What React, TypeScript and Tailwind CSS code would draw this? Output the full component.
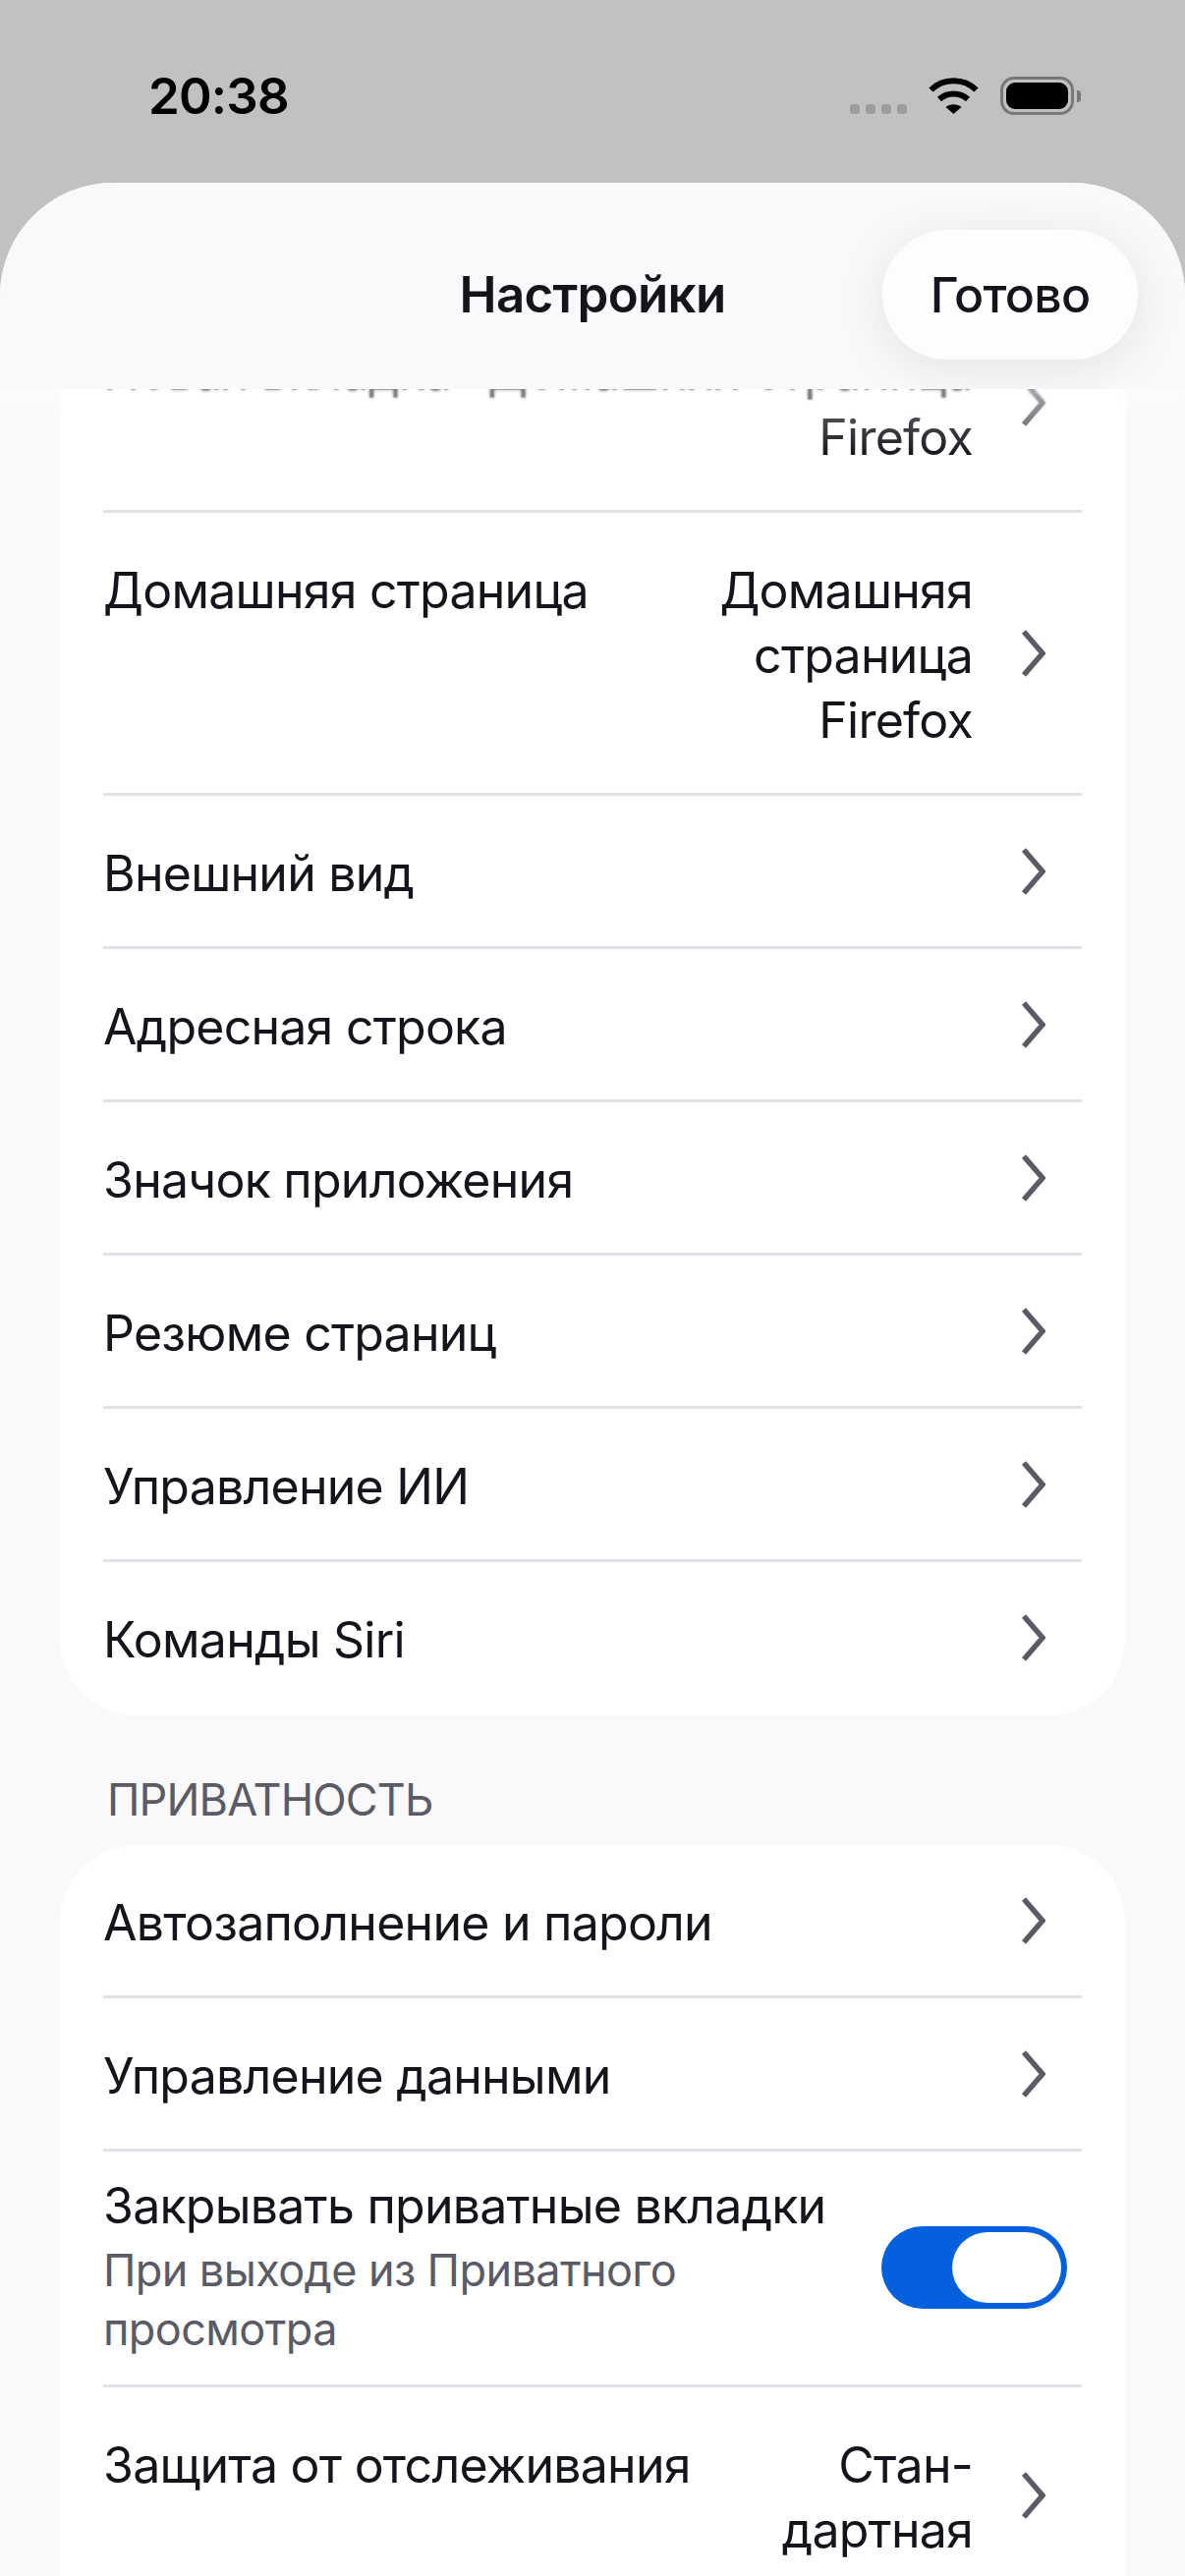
import React from "react";

const Chevron = () => (
  <svg width="25" height="50" viewBox="0 0 25 50" className="shrink-0" fill="none">
    <path d="M3 3 L22 25 L3 47" stroke="#5b5b66" strokeWidth="5.5" />
  </svg>
);

function Row({ label, value, last }: { label: string; value?: string[]; last?: boolean }) {
  return (
    <div className={`mx-[44px] flex items-center pr-[35px] ${last ? "pb-[44px] pt-[46px]" : "border-b-[3px] border-[#e0e0e6] pb-[41px] pt-[46px]"}`}>
      <div className="flex flex-1 items-start justify-between self-start">
        <span>{label}</span>
        {value && (
          <span className="text-right">
            {value.map((v) => (
              <span key={v} className="block">
                {v}
              </span>
            ))}
          </span>
        )}
      </div>
      <div className="ml-[49px] mr-[2px] mt-[-5px]">
        <Chevron />
      </div>
    </div>
  );
}

function Wifi() {
  return (
    <svg width="51" height="37" viewBox="0 0 51 37" fill="none">
      <path d="M2.5 12.5 C15 0 36 0 48.5 12.5" stroke="#000" strokeWidth="6" />
      <path d="M11 22 C19 14.5 32 14.5 40 22" stroke="#000" strokeWidth="6" />
      <path d="M17.5 30 C22 26.2 29 26.2 33.5 30 L25.5 37 Z" fill="#000" />
    </svg>
  );
}

export default function App() {
  return (
    <div className="flex h-[2622px] w-[1206px] flex-col overflow-hidden bg-[#c1c1c3] font-['Inter',sans-serif] text-[50px] leading-[66px] tracking-[-0.75px] text-[#15141a]">
      <div className="flex h-[186px] shrink-0 items-start justify-between pl-[151px] pr-[106px]">
        <span className="mt-[65px] text-[51px] font-semibold leading-[66px] tracking-[-0.8px] text-black">20:38</span>
        <div className="mt-[78px] flex items-start">
          <div className="mt-[28px] flex gap-[6px]">
            <span className="h-[10px] w-[10px] rounded-[3px] bg-[#9e9e9f]" />
            <span className="h-[10px] w-[10px] rounded-[3px] bg-[#9e9e9f]" />
            <span className="h-[10px] w-[10px] rounded-[3px] bg-[#9e9e9f]" />
            <span className="h-[10px] w-[10px] rounded-[3px] bg-[#9e9e9f]" />
          </div>
          <div className="ml-[22px] mt-[1px]">
            <Wifi />
          </div>
          <div className="ml-[22px] flex items-center">
            <div className="h-[39px] w-[75px] rounded-[14px] border-[3px] border-[#78787a] p-[3px]">
              <div className="h-full w-full rounded-[9px] bg-black" />
            </div>
            <div className="ml-[3px] h-[12px] w-[4px] rounded-r-[3px] bg-[#78787a]" />
          </div>
        </div>
      </div>

      <div className="relative flex-1 overflow-hidden rounded-t-[115px] bg-[#f9f9fb]">
        <div className="px-[61px] pt-[114px]">
          <div className="overflow-hidden rounded-[78px] bg-white">
            <Row label="Новая вкладка" value={["Домашняя страница", "Firefox"]} />
            <Row label="Домашняя страница" value={["Домашняя", "страница", "Firefox"]} />
            <Row label="Внешний вид" />
            <Row label="Адресная строка" />
            <Row label="Значок приложения" />
            <Row label="Резюме страниц" />
            <Row label="Управление ИИ" />
            <Row label="Команды Siri" last />
          </div>

          <div className="mb-[18px] ml-[48px] mt-[57px] text-[45px] leading-[57px] tracking-[-0.85px] text-[#5b5b66]">ПРИВАТНОСТЬ</div>

          <div className="overflow-hidden rounded-t-[78px] bg-white">
            <Row label="Автозаполнение и пароли" />
            <Row label="Управление данными" />
            <div className="mx-[44px] flex items-center border-b-[3px] border-[#e0e0e6] pb-[26px] pr-[15px] pt-[22px]">
              <div className="flex-1">
                <div className="mb-[3px]">Закрывать приватные вкладки</div>
                <div className="text-[45px] leading-[60px] tracking-[-0.6px] text-[#5b5b66]">
                  При выходе из Приватного
                  <br />
                  просмотра
                </div>
              </div>
              <div className="mt-[2px] flex h-[84px] w-[189px] shrink-0 items-center justify-end rounded-full bg-[#0560dd] pr-[6px]">
                <div className="h-[72px] w-[111px] rounded-full bg-white" />
              </div>
            </div>
            <Row label="Защита от отслеживания" value={["Стан-", "дартная"]} />
          </div>
        </div>

        <div className="absolute inset-x-0 top-[210px] h-[70px] bg-gradient-to-b from-[#ffffff66] to-[#ffffff00]" />
        <div className="absolute inset-x-0 top-[210px] h-[30px] backdrop-blur-[1.5px] [mask-image:linear-gradient(to_bottom,black,transparent)]" />

        <div className="absolute inset-x-0 top-0 flex h-[210px] items-center justify-center overflow-hidden bg-[#f9f9fb]">
          <span className="mt-[18px] text-[51px] font-semibold tracking-[-0.7px]">Настройки</span>
          <div className="absolute left-[898px] top-[48px] flex h-[132px] w-[260px] items-center justify-center rounded-full bg-[#fdfdfe] font-medium shadow-[0_8px_50px_rgba(0,0,0,0.09)]">
            Готово
          </div>
        </div>
      </div>
    </div>
  );
}
